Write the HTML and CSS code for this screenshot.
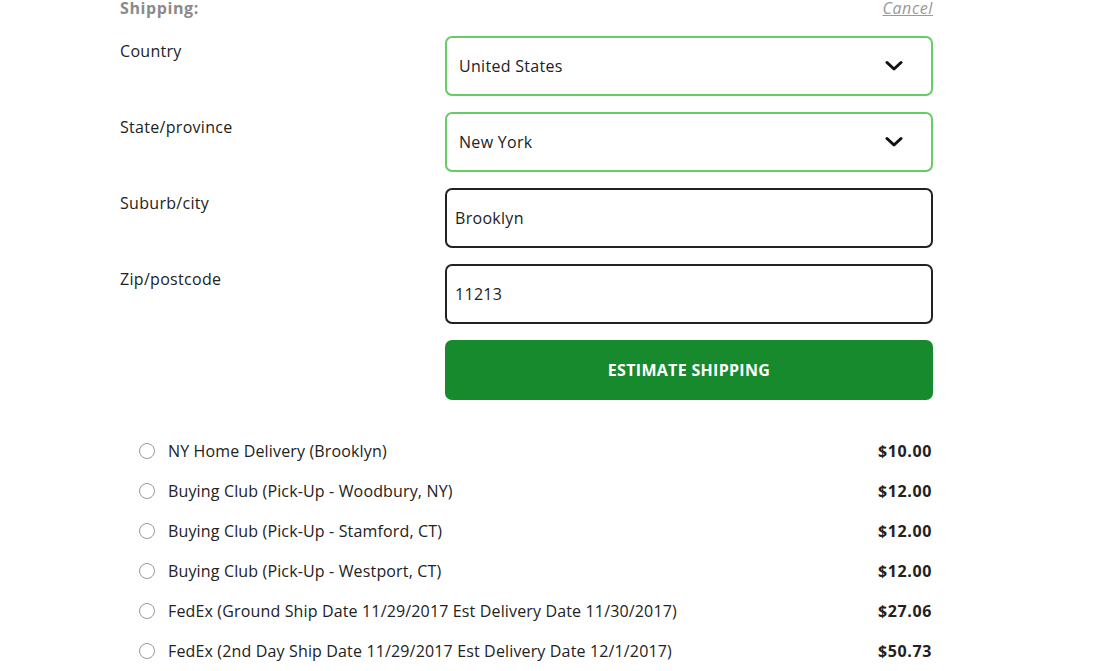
FILE: index.html
```html
<!DOCTYPE html>
<html>
<head>
<meta charset="utf-8">
<link rel="stylesheet" href="styles.css">
</head>
<body>
<div class="wrap">
  <div class="head">
    <span class="title">Shipping:</span>
    <a class="cancel" href="#">Cancel</a>
  </div>
  <div class="form">
    <div class="label">Country</div>
    <div class="field select"><span>United States</span>
      <svg class="chev" width="18" height="12" viewBox="0 0 18 12"><path d="M2 2.5 L9 9 L16 2.5" fill="none" stroke="#111" stroke-width="3" stroke-linecap="round" stroke-linejoin="round"/></svg>
    </div>
    <div class="label">State/province</div>
    <div class="field select"><span>New York</span>
      <svg class="chev" width="18" height="12" viewBox="0 0 18 12"><path d="M2 2.5 L9 9 L16 2.5" fill="none" stroke="#111" stroke-width="3" stroke-linecap="round" stroke-linejoin="round"/></svg>
    </div>
    <div class="label">Suburb/city</div>
    <div class="field text"><span>Brooklyn</span></div>
    <div class="label">Zip/postcode</div>
    <div class="field text"><span>11213</span></div>
    <div class="label"></div>
    <button class="btn">ESTIMATE SHIPPING</button>
  </div>
  <ul class="options">
    <li><span class="radio"></span><span class="name">NY Home Delivery (Brooklyn)</span><span class="price">$10.00</span></li>
    <li><span class="radio"></span><span class="name">Buying Club (Pick-Up - Woodbury, NY)</span><span class="price">$12.00</span></li>
    <li><span class="radio"></span><span class="name">Buying Club (Pick-Up - Stamford, CT)</span><span class="price">$12.00</span></li>
    <li><span class="radio"></span><span class="name">Buying Club (Pick-Up - Westport, CT)</span><span class="price">$12.00</span></li>
    <li><span class="radio"></span><span class="name">FedEx (Ground Ship Date 11/29/2017 Est Delivery Date 11/30/2017)</span><span class="price">$27.06</span></li>
    <li><span class="radio"></span><span class="name">FedEx (2nd Day Ship Date 11/29/2017 Est Delivery Date 12/1/2017)</span><span class="price">$50.73</span></li>
  </ul>
</div>
</body>
</html>
```
FILE: styles.css
```css
* { box-sizing: border-box; }
body {
  margin: 0;
  background: #fff;
  font-family: "Open Sans", "Liberation Sans", sans-serif;
  color: #222;
  letter-spacing: 0.15px;
  overflow: hidden;
}
.wrap {
  width: 813px;
  margin-left: 120px;
}
.head {
  display: flex;
  justify-content: space-between;
  align-items: center;
  height: 16px;
  margin-bottom: 20px;
  line-height: 16px;
}
.title {
  font-weight: 700;
  font-size: 16px;
  letter-spacing: 0.6px;
  color: #8a8a8a;
}
.cancel {
  font-style: italic;
  font-size: 16px;
  letter-spacing: 0.6px;
  color: #9a9a9a;
  text-decoration: underline;
}
.form {
  display: grid;
  grid-template-columns: 325px 488px;
  row-gap: 16px;
}
.label {
  font-size: 16px;
  line-height: 20px;
  padding-top: 5px;
  letter-spacing: 0.3px;
}
.field {
  height: 60px;
  border-radius: 7px;
  display: flex;
  align-items: center;
  font-size: 16px;
  letter-spacing: 0.3px;
}
.select {
  border: 2px solid #66cc66;
  padding: 0 28px 0 12px;
  justify-content: space-between;
}
.text {
  border: 2px solid #222;
  padding: 0 8px;
}
.chev { display: block; }
.btn {
  grid-column: 2;
  height: 60px;
  border: 0;
  border-radius: 7px;
  background: #168a2c;
  color: #fff;
  font-family: inherit;
  font-weight: 700;
  font-size: 16px;
  letter-spacing: 0.3px;
}
.options {
  list-style: none;
  margin: 31px 0 0 0;
  padding: 0;
}
.options li {
  display: flex;
  align-items: center;
  height: 40px;
  font-size: 16px;
}
.radio {
  width: 16px;
  height: 16px;
  border: 1px solid #999;
  border-radius: 50%;
  margin-left: 19px;
  margin-right: 13px;
  flex: none;
}
.name { flex: 1; }
.price { font-weight: 700; letter-spacing: 0.6px; margin-right: 1px; }
```
